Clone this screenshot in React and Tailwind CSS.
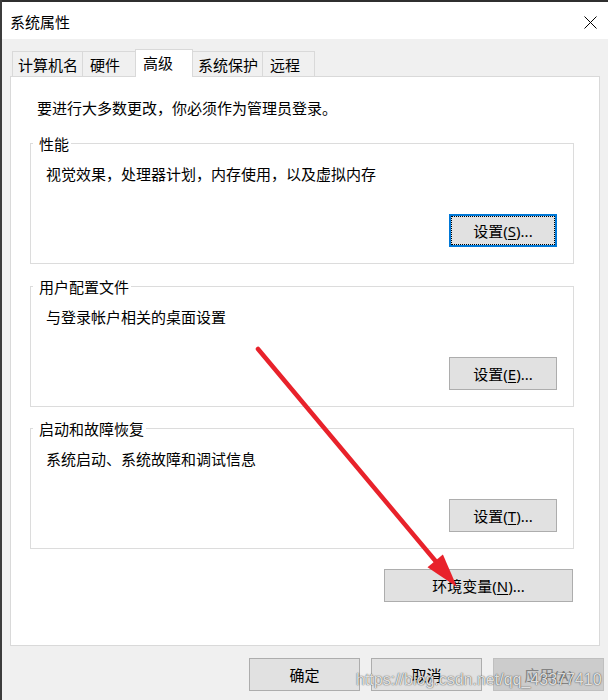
import React from "react";

const FONT = { fontFamily: '"Noto Sans", "Noto Sans CJK SC", sans-serif' };

function Btn({ children, className = "", focused = false, disabled = false }) {
  return (
    <div
      className={
        "relative flex items-center justify-center text-[15px] leading-[20px] " +
        (disabled
          ? "bg-[#cccccc] border border-[#bfbfbf] text-[#838383] "
          : focused
          ? "bg-[#e1e1e1] border-2 border-[#0078d7] text-black "
          : "bg-[#e1e1e1] border border-[#adadad] text-black ") +
        className
      }
    >
      {focused && <span className="absolute inset-0 border border-dotted border-black" />}
      <span className="relative">{children}</span>
    </div>
  );
}

function Group({ title, desc, btn, focused, className = "" }) {
  return (
    <div
      className={
        "relative w-[544px] h-[121px] border border-[#dcdcdc] flex flex-col pl-[15px] pr-[16px] pt-[20px] " +
        className
      }
    >
      <span className="absolute -top-[10px] left-[2px] bg-white pl-[6px] pr-[2px] leading-[20px] text-[15px] text-black">
        {title}
      </span>
      <p className="leading-[20px] text-[15px] text-black">{desc}</p>
      <Btn focused={focused} className="self-end mt-[30px] w-[108px] h-[33px]">
        {btn}
      </Btn>
    </div>
  );
}

function Tab({ label, w, active = false, first = false, pl = "pl-[7px]" }) {
  return (
    <div
      className={
        "flex items-start pt-[3px] text-[15px] leading-[20px] text-black border-t border-r border-[#d9d9d9] " +
        pl +
        " " +
        (first ? "border-l " : "") +
        (active
          ? "relative z-10 bg-white h-[28px] -mb-[1px] -ml-[1px] border-l"
          : "bg-[#f0f0f0] h-[25px]") +
        " " +
        w
      }
    >
      {label}
    </div>
  );
}

export default function App() {
  return (
    <div
      className="relative w-[608px] h-[700px] overflow-hidden bg-[#f0f0f0] border-l-2 border-[#3c3c3c] flex flex-col"
      style={FONT}
    >
      {/* desktop strip above window */}
      <div className="h-[2px] bg-[#2f2f2f]" />

      {/* title bar */}
      <div className="h-[37px] bg-white flex items-center justify-between pl-[8px] pr-[11px] pt-[3px]">
        <span className="text-[15px] leading-[20px] text-black">系统属性</span>
        <svg width="13" height="13" viewBox="0 0 13 13" className="block">
          <path d="M0.5 0.5 L12.5 12.5 M12.5 0.5 L0.5 12.5" stroke="#000" strokeWidth="1" fill="none" />
        </svg>
      </div>

      {/* body */}
      <div className="flex-1 flex flex-col pt-[10px]">
        {/* tabs */}
        <div className="flex items-end ml-[10px] h-[27px]">
          <Tab label="计算机名" w="w-[71px]" first pl="pl-[5px]" />
          <Tab label="硬件" w="w-[53px]" />
          <Tab label="高级" w="w-[58px]" active pl="pl-[7px]" />
          <Tab label="系统保护" w="w-[70px]" pl="pl-[5px]" />
          <Tab label="远程" w="w-[52px]" />
        </div>

        {/* panel */}
        <div className="ml-[8px] w-[590px] h-[570px] bg-white border border-[#d9d9d9] flex flex-col">
          <p className="mt-[21px] ml-[26px] text-[15px] leading-[20px] text-black">
            要进行大多数更改，你必须作为管理员登录。
          </p>

          <Group
            className="ml-[19px] mt-[25px]"
            title="性能"
            desc="视觉效果，处理器计划，内存使用，以及虚拟内存"
            focused
            btn={
              <>
                设置(<span className="underline underline-offset-[2px]">S</span>)...
              </>
            }
          />
          <Group
            className="ml-[19px] mt-[22px]"
            title="用户配置文件"
            desc="与登录帐户相关的桌面设置"
            btn={
              <>
                设置(<span className="underline underline-offset-[2px]">E</span>)...
              </>
            }
          />
          <Group
            className="ml-[19px] mt-[21px]"
            title="启动和故障恢复"
            desc="系统启动、系统故障和调试信息"
            btn={
              <>
                设置(<span className="underline underline-offset-[2px]">T</span>)...
              </>
            }
          />

          <Btn className="ml-[373px] mt-[20px] w-[189px] h-[33px]">
            环境变量(<span className="underline underline-offset-[2px]">N</span>)...
          </Btn>
        </div>

        {/* bottom buttons */}
        <div className="flex justify-end gap-[11px] pr-[4px] mt-[12px]">
          <Btn className="w-[111px] h-[33px]">确定</Btn>
          <Btn className="w-[111px] h-[33px]">取消</Btn>
          <Btn disabled className="w-[111px] h-[33px]">
            应用(<span className="underline underline-offset-[2px]">A</span>)
          </Btn>
        </div>
      </div>

      {/* red annotation arrow */}
      <svg
        className="absolute left-0 top-0 pointer-events-none"
        width="608"
        height="700"
        viewBox="0 0 608 700"
      >
        <line x1="256" y1="349" x2="436" y2="564" stroke="#e8222b" strokeWidth="4.5" strokeLinecap="round" />
        <polygon points="455,587 425.5,567.3 440.9,554.5" fill="#e8222b" />
      </svg>

      {/* watermark */}
      <span
        className="absolute left-[354px] top-[670px] text-[16px] leading-[20px] text-[#f6f6f6]/90 pointer-events-none whitespace-nowrap [text-shadow:0_0_1px_rgba(0,0,0,0.75),0_0_2px_rgba(0,0,0,0.25)]"
        style={{ fontFamily: '"Liberation Sans", Arial, sans-serif' }}
      >
        https://blog.csdn.net/qq_43377410
      </span>
    </div>
  );
}
